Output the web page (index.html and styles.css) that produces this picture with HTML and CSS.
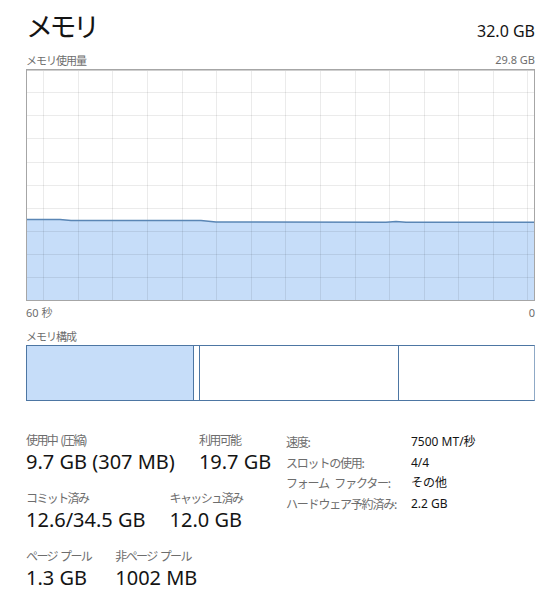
FILE: index.html
```
<!DOCTYPE html>
<html lang="ja">
<head>
<meta charset="utf-8">
<link rel="stylesheet" href="styles.css">
</head>
<body>
<div class="page">
  <div class="header">
    <div class="title">メモリ</div>
    <div class="total">32.0 GB</div>
  </div>
  <div class="caption-row">
    <span class="jp">メモリ使用量</span>
    <span>29.8 GB</span>
  </div>
  <div class="graph">
    <svg width="509" height="232" viewBox="0 0 509 232">
      <polygon class="fill" points="0,150.5 34,150.5 45,151.5 175,151.5 190,153 360,153.3 370,152.4 380,153.3 509,153.3 509,232 0,232"/>
      <g class="grid">
        <line x1="0" y1="23.5" x2="509" y2="23.5"/>
        <line x1="0" y1="46.5" x2="509" y2="46.5"/>
        <line x1="0" y1="69.5" x2="509" y2="69.5"/>
        <line x1="0" y1="93.5" x2="509" y2="93.5"/>
        <line x1="0" y1="116.5" x2="509" y2="116.5"/>
        <line x1="0" y1="139.5" x2="509" y2="139.5"/>
        <line x1="0" y1="162.5" x2="509" y2="162.5"/>
        <line x1="0" y1="185.5" x2="509" y2="185.5"/>
        <line x1="0" y1="208.5" x2="509" y2="208.5"/>
        <line x1="17.5" y1="0" x2="17.5" y2="232"/>
        <line x1="52.5" y1="0" x2="52.5" y2="232"/>
        <line x1="86.5" y1="0" x2="86.5" y2="232"/>
        <line x1="121.5" y1="0" x2="121.5" y2="232"/>
        <line x1="156.5" y1="0" x2="156.5" y2="232"/>
        <line x1="190.5" y1="0" x2="190.5" y2="232"/>
        <line x1="225.5" y1="0" x2="225.5" y2="232"/>
        <line x1="259.5" y1="0" x2="259.5" y2="232"/>
        <line x1="294.5" y1="0" x2="294.5" y2="232"/>
        <line x1="329.5" y1="0" x2="329.5" y2="232"/>
        <line x1="363.5" y1="0" x2="363.5" y2="232"/>
        <line x1="398.5" y1="0" x2="398.5" y2="232"/>
        <line x1="432.5" y1="0" x2="432.5" y2="232"/>
        <line x1="467.5" y1="0" x2="467.5" y2="232"/>
        <line x1="501.5" y1="0" x2="501.5" y2="232"/>
      </g>
      <polyline class="line" points="0,150.5 34,150.5 45,151.5 175,151.5 190,153 360,153.3 370,152.4 380,153.3 509,153.3"/>
      <path class="frame-top" d="M0,1.5 H509"/>
      <rect class="frame" x="0.5" y="0.5" width="508" height="231"/>
    </svg>
  </div>
  <div class="axis-row">
    <span class="jp-plain">60 秒</span>
    <span>0</span>
  </div>
  <div class="caption jp">メモリ構成</div>
  <div class="composition">
    <div class="seg inuse"></div>
    <div class="seg modified"></div>
    <div class="seg standby"></div>
    <div class="seg free"></div>
  </div>
  <div class="stats">
    <div class="stats-left">
      <div class="stat-row">
        <div class="stat">
          <div class="label">使用中 (圧縮)</div>
          <div class="value">9.7 GB (307 MB)</div>
        </div>
        <div class="stat">
          <div class="label">利用可能</div>
          <div class="value">19.7 GB</div>
        </div>
      </div>
      <div class="stat-row">
        <div class="stat">
          <div class="label">コミット済み</div>
          <div class="value">12.6/34.5 GB</div>
        </div>
        <div class="stat">
          <div class="label">キャッシュ済み</div>
          <div class="value">12.0 GB</div>
        </div>
      </div>
      <div class="stat-row">
        <div class="stat">
          <div class="label">ページ プール</div>
          <div class="value">1.3 GB</div>
        </div>
        <div class="stat">
          <div class="label">非ページ プール</div>
          <div class="value">1002 MB</div>
        </div>
      </div>
    </div>
    <div class="stats-right">
      <div class="k">速度:</div><div class="v">7500 MT/秒</div>
      <div class="k">スロットの使用:</div><div class="v">4/4</div>
      <div class="k">フォーム ファクター:</div><div class="v">その他</div>
      <div class="k">ハードウェア予約済み:</div><div class="v">2.2 GB</div>
    </div>
  </div>
</div>
</body>
</html>
```

FILE: styles.css
```
html, body {
  margin: 0;
  padding: 0;
  background: #ffffff;
}

body {
  font-family: "Noto Sans", "Noto Sans CJK JP", sans-serif;
  color: #1a1a1a;
}

.jp {
  font-family: "Noto Sans CJK JP", sans-serif;
  letter-spacing: -1px;
}

.jp-plain {
  font-family: "Noto Sans", "Noto Sans CJK JP", sans-serif;
}

.page {
  padding: 6px 11px 0 26px;
  width: 509px;
}

.header {
  display: flex;
  justify-content: space-between;
  align-items: baseline;
  height: 46px;
}

.title {
  font-family: "Noto Sans CJK JP", sans-serif;
  font-size: 27px;
  line-height: 40px;
  letter-spacing: -3.5px;
  color: #141414;
}

.total {
  font-size: 16px;
  color: #141414;
}

.caption-row {
  display: flex;
  justify-content: space-between;
  font-size: 11px;
  line-height: 16px;
  color: #6d6d6d;
  height: 17px;
}

.graph {
  height: 232px;
}

.graph svg {
  display: block;
}

.fill {
  fill: #c6ddf9;
}

.grid line {
  stroke: rgba(0, 0, 0, 0.08);
  stroke-width: 1;
}

.line {
  fill: none;
  stroke: #5a86b5;
  stroke-width: 1.5;
}

.frame {
  fill: none;
  stroke: #a6a6a6;
  stroke-width: 1;
}

.frame-top {
  stroke: #cfcfcf;
  stroke-width: 1;
}

.axis-row {
  display: flex;
  justify-content: space-between;
  font-size: 11px;
  line-height: 16px;
  color: #6d6d6d;
  margin-top: 4px;
  height: 23px;
}

.caption {
  font-size: 11px;
  line-height: 16px;
  color: #6d6d6d;
  height: 17px;
}

.composition {
  display: flex;
  height: 56px;
  border: 1px solid #4d76a3;
  border-right-color: #8fa9c6;
  box-sizing: border-box;
}

.seg {
  height: 100%;
  box-sizing: border-box;
}

.inuse {
  width: 167px;
  background: #c6ddf9;
  border-right: 1px solid #4d76a3;
}

.modified {
  width: 6px;
  border-right: 1px solid #4d76a3;
}

.standby {
  width: 199px;
  border-right: 1px solid #4d76a3;
}

.free {
  flex: 1;
}

.stats {
  display: flex;
  margin-top: 30px;
}

.stats-left {
  width: 260px;
  display: flex;
  flex-direction: column;
  gap: 14px;
}

.stat-row {
  display: flex;
  gap: 24px;
}

.label {
  font-family: "Noto Sans CJK JP", sans-serif;
  font-size: 12px;
  line-height: 17px;
  letter-spacing: -1.6px;
  word-spacing: 2px;
  color: #6d6d6d;
}

.value {
  font-size: 20px;
  line-height: 27px;
  color: #141414;
}

.stats-right {
  display: grid;
  grid-template-columns: 125px auto;
  grid-auto-rows: 20.5px;
  align-content: start;
  font-size: 12px;
  line-height: 20px;
  margin-top: 1px;
}

.k {
  font-family: "Noto Sans CJK JP", sans-serif;
  letter-spacing: -1.2px;
  word-spacing: 4px;
  color: #6d6d6d;
}

.v {
  font-family: "Noto Sans", "Noto Sans CJK JP", sans-serif;
  color: #141414;
}
```
